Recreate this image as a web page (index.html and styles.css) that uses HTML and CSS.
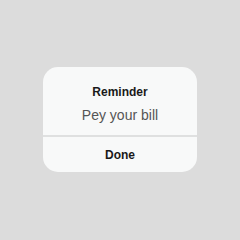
FILE: index.html
```html
<!DOCTYPE html>
<html>
<head>
<meta charset="utf-8">
<link rel="stylesheet" href="styles.css">
</head>
<body>
<div class="screen">
  <div class="alert">
    <div class="alert-body">
      <div class="alert-title">Reminder</div>
      <div class="alert-message">Pey your bill</div>
    </div>
    <div class="alert-action">Done</div>
  </div>
</div>
</body>
</html>
```

FILE: styles.css
```css
html, body {
  margin: 0;
  padding: 0;
}
body {
  background: #dcdcdc;
  font-family: "Liberation Sans", Arial, sans-serif;
}
.screen {
  width: 240px;
  height: 240px;
  display: flex;
  align-items: flex-start;
  justify-content: center;
  padding-top: 67px;
  box-sizing: border-box;
}
.alert {
  width: 154px;
  height: 105px;
  background: #f8f9f9;
  border-radius: 15px;
  display: flex;
  flex-direction: column;
  overflow: hidden;
}
.alert-body {
  height: 70px;
  display: flex;
  flex-direction: column;
  align-items: center;
  padding-top: 18px;
  box-sizing: border-box;
  border-bottom: 2px solid #dfe0e0;
}
.alert-title {
  font-size: 12px;
  font-weight: bold;
  color: #1a1a1a;
  line-height: 14px;
}
.alert-message {
  font-size: 14px;
  color: #555;
  line-height: 16px;
  margin-top: 8px;
}
.alert-action {
  flex: 1;
  display: flex;
  align-items: center;
  justify-content: center;
  font-size: 12px;
  font-weight: bold;
  color: #1a1a1a;
}
```
